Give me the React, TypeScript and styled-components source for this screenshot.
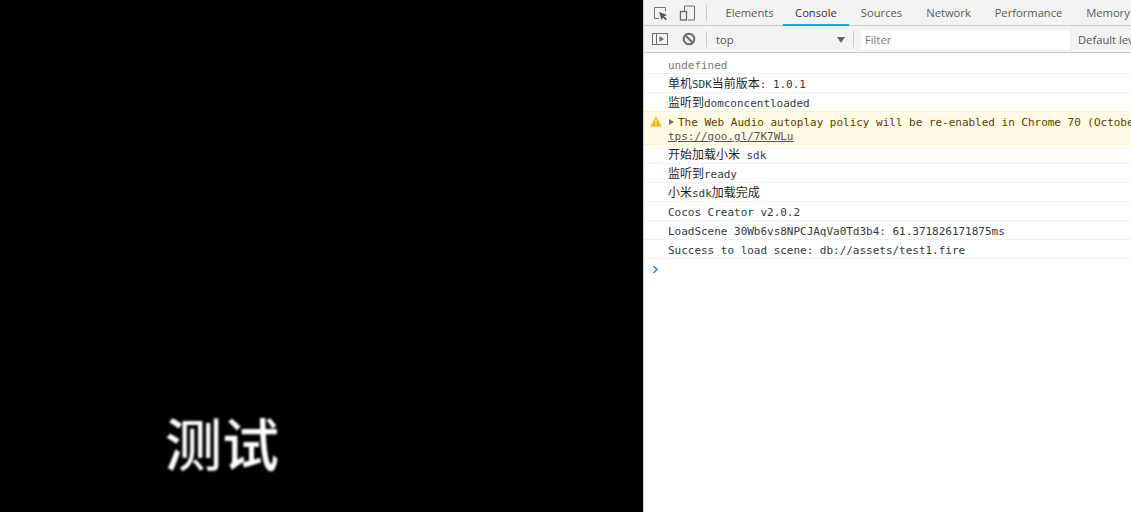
import React from "react";
import styled, { createGlobalStyle } from "styled-components";

const Global = createGlobalStyle`
  html, body { margin: 0; padding: 0; width: 1131px; height: 512px; overflow: hidden; background: #fff; }
  #root { width: 1131px; height: 512px; }
`;

const Page = styled.div`
  display: flex;
  width: 1131px;
  height: 512px;
  overflow: hidden;
`;

const Stage = styled.div`
  width: 643px;
  height: 512px;
  flex: none;
  background: #000;
  display: flex;
  flex-direction: column;
  justify-content: flex-end;
  padding: 0 0 39px 165px;
  box-sizing: border-box;
`;

const StageText = styled.div`
  font-family: "Noto Sans CJK SC", sans-serif;
  font-size: 57px;
  font-weight: 500;
  line-height: 64px;
  color: #fff;
  filter: blur(0.9px);
`;

const Devtools = styled.div`
  width: 488px;
  flex: none;
  border-left: 1px solid #ccc;
  box-sizing: border-box;
  background: #fff;
  overflow: hidden;
  display: flex;
  flex-direction: column;
`;

const TabBar = styled.div`
  height: 26px;
  flex: none;
  box-sizing: border-box;
  background: #f3f3f3;
  border-bottom: 1px solid #ccc;
  display: flex;
  align-items: stretch;
  font-family: "Open Sans", sans-serif;
  font-size: 11.2px;
  white-space: nowrap;
`;

const TabIcons = styled.div`
  display: flex;
  align-items: center;
  gap: 11px;
  width: 62px;
  flex: none;
  padding-left: 9px;
  box-sizing: border-box;
`;

const Divider = styled.div`
  width: 1px;
  height: 16px;
  background: #ccc;
  flex: none;
  align-self: center;
`;

const Tab = styled.div<{ $active?: boolean; $w: number }>`
  width: ${(p) => p.$w}px;
  flex: none;
  display: flex;
  align-items: center;
  justify-content: center;
  height: 26px;
  box-sizing: border-box;
  color: ${(p) => (p.$active ? "#333" : "#5a5a5a")};
  border-bottom: ${(p) => (p.$active ? "2px solid #03a9f4" : "none")};
  padding-bottom: ${(p) => (p.$active ? "0" : "2px")};
`;

const TabSpacer = styled.div`
  width: 9px;
  flex: none;
`;

const FilterBar = styled.div`
  height: 27px;
  flex: none;
  box-sizing: border-box;
  background: #f3f3f3;
  border-bottom: 1px solid #ccc;
  display: flex;
  align-items: center;
  font-family: "Open Sans", sans-serif;
  font-size: 11.2px;
  color: #444;
  white-space: nowrap;
`;

const FilterIcons = styled.div`
  display: flex;
  align-items: center;
  gap: 14px;
  width: 62px;
  padding-left: 8px;
  flex: none;
  box-sizing: border-box;
`;

const ContextSelect = styled.div`
  width: 146px;
  flex: none;
  display: flex;
  align-items: center;
  justify-content: space-between;
  padding: 1px 8px 0 9px;
  box-sizing: border-box;
  color: #555;
`;

const Caret = styled.span`
  width: 0;
  height: 0;
  border-left: 4px solid transparent;
  border-right: 4px solid transparent;
  border-top: 6px solid #666;
`;

const FilterInput = styled.input`
  width: 209px;
  height: 20px;
  margin: 1px 0 0 7px;
  flex: none;
  border: none;
  outline: none;
  background: #fff;
  padding: 0 4px;
  box-sizing: border-box;
  font-family: "Open Sans", sans-serif;
  font-size: 11.2px;
  &::placeholder { color: #777; opacity: 1; }
`;

const Levels = styled.div`
  margin: 1px 0 0 8px;
  color: #555;
`;

const Log = styled.div`
  flex: 1;
  padding-top: 2px;
  font-family: "DejaVu Sans Mono", "Noto Sans CJK SC", monospace;
  font-size: 11px;
  letter-spacing: -0.02px;
  line-height: 14px;
  color: #303942;
`;

const Row = styled.div<{ $muted?: boolean; $cjk?: boolean }>`
  height: 19px;
  box-sizing: border-box;
  border-bottom: 1px solid #f0f0f0;
  padding: ${(p) => (p.$cjk ? "2px" : "4px")} 0 0 24px;
  white-space: nowrap;
  overflow: hidden;
  color: ${(p) => (p.$muted ? "#787878" : "#303942")};
`;

const Cjk = styled.span`
  font-family: "Noto Sans CJK SC", sans-serif;
  font-size: 12px;
  color: #1f1f1f;
`;

const WarnRow = styled.div`
  height: 34px;
  box-sizing: border-box;
  margin-top: -1px;
  background: #fffbe5;
  border-top: 1px solid #fff5c2;
  border-bottom: 1px solid #fff5c2;
  padding: 4px 0 0 6px;
  color: #5c3b00;
  display: flex;
  white-space: nowrap;
  overflow: hidden;
`;

const WarnIcon = styled.div`
  width: 18px;
  flex: none;
  display: flex;
  align-items: flex-start;
`;

const WarnBody = styled.div`
  min-width: 0;
`;

const Expander = styled.span`
  display: inline-block;
  width: 0;
  height: 0;
  margin: 0 4px 1px 1px;
  border-top: 3.5px solid transparent;
  border-bottom: 3.5px solid transparent;
  border-left: 5px solid #727272;
`;

const LinkText = styled.span`
  color: #545454;
  text-decoration: underline;
`;

const Prompt = styled.div`
  padding: 6px 0 0 8px;
  height: 20px;
  box-sizing: border-box;
  display: flex;
  align-items: flex-start;
`;

export default function App() {
  return (
    <Page>
      <Global />
      <Stage>
        <StageText>测试</StageText>
      </Stage>
      <Devtools>
        <TabBar>
          <TabIcons>
            <svg width="15" height="16" viewBox="0 0 15 16" fill="none">
              <path d="M6 13.5H1.5V2.5H12.5V6" stroke="#777" strokeWidth="1" />
              <path d="M6 7L14 10L11 11.2L14 14L12.8 15.3L9.9 12.5L8.8 15.5Z" fill="#555" />
            </svg>
            <svg width="17" height="16" viewBox="0 0 17 16" fill="none">
              <path d="M5.5 6V1H15.5V15H9" stroke="#6e6e6e" strokeWidth="1" />
              <rect x="1.5" y="6.5" width="6" height="8.5" stroke="#6e6e6e" strokeWidth="1.4" />
            </svg>
          </TabIcons>
          <Divider />
          <TabSpacer />
          <Tab $w={67}>Elements</Tab>
          <Tab $w={66} $active>Console</Tab>
          <Tab $w={65}>Sources</Tab>
          <Tab $w={69}>Network</Tab>
          <Tab $w={91}>Performance</Tab>
          <Tab $w={68}>Memory</Tab>
        </TabBar>
        <FilterBar>
          <FilterIcons>
            <svg width="16" height="14" viewBox="0 0 16 14" fill="none">
              <rect x="0.5" y="1.5" width="15" height="11" stroke="#6e6e6e" />
              <path d="M4.5 1.5V12.5" stroke="#6e6e6e" />
              <path d="M7.5 4L12 7L7.5 10Z" fill="#6e6e6e" />
            </svg>
            <svg width="14" height="14" viewBox="0 0 14 14" fill="none">
              <circle cx="7" cy="7" r="5.3" stroke="#6e6e6e" strokeWidth="2" />
              <path d="M3.3 3.3L10.7 10.7" stroke="#6e6e6e" strokeWidth="2" />
            </svg>
          </FilterIcons>
          <Divider />
          <ContextSelect>
            <span>top</span>
            <Caret />
          </ContextSelect>
          <Divider />
          <FilterInput placeholder="Filter" readOnly />
          <Levels>Default levels</Levels>
        </FilterBar>
        <Log>
          <Row $muted>undefined</Row>
          <Row $cjk><Cjk>单机</Cjk>SDK<Cjk>当前版本</Cjk>: 1.0.1</Row>
          <Row $cjk><Cjk>监听到</Cjk>domconcentloaded</Row>
          <WarnRow>
            <WarnIcon>
              <svg width="12" height="11" viewBox="0 0 12 11">
                <path d="M6 0.5L11.7 10.5H0.3Z" fill="#f4b400" />
                <path d="M5.4 3.5H6.6V7.2H5.4ZM5.4 8H6.6V9.2H5.4Z" fill="#fff" />
              </svg>
            </WarnIcon>
            <WarnBody>
              <div><Expander />The Web Audio autoplay policy will be re-enabled in Chrome 70 (October 2018)</div>
              <LinkText>tps://goo.gl/7K7WLu</LinkText>
            </WarnBody>
          </WarnRow>
          <Row $cjk><Cjk>开始加载小米</Cjk> sdk</Row>
          <Row $cjk><Cjk>监听到</Cjk>ready</Row>
          <Row $cjk><Cjk>小米</Cjk>sdk<Cjk>加载完成</Cjk></Row>
          <Row>Cocos Creator v2.0.2</Row>
          <Row>LoadScene 30Wb6vs8NPCJAqVa0Td3b4: 61.371826171875ms</Row>
          <Row>Success to load scene: db://assets/test1.fire</Row>
          <Prompt>
            <svg width="7" height="9" viewBox="0 0 7 9" fill="none">
              <path d="M1.5 1L5 4.5L1.5 8" stroke="#367cf1" strokeWidth="1.6" />
            </svg>
          </Prompt>
        </Log>
      </Devtools>
    </Page>
  );
}
